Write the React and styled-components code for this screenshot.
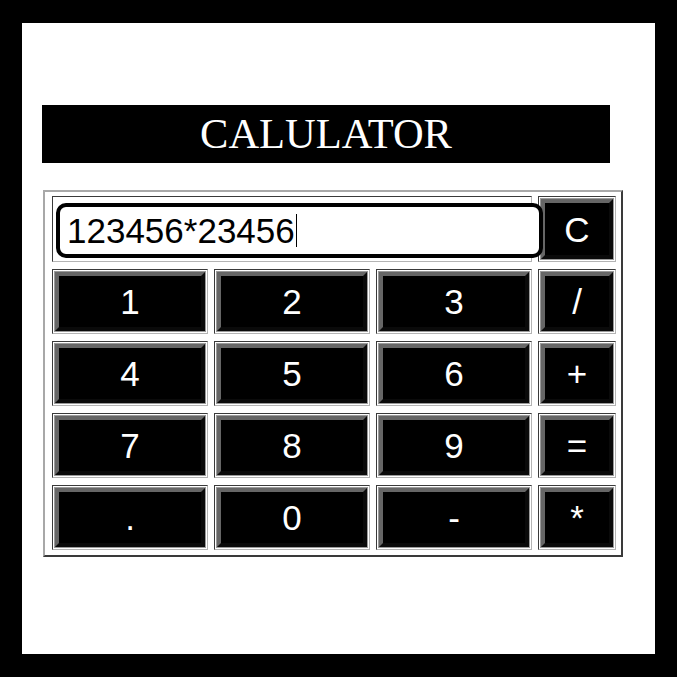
import React from "react";
import styled, { createGlobalStyle } from "styled-components";

const Global = createGlobalStyle`
  html, body { margin: 0; padding: 0; background: #000; }
  body { font-family: "Liberation Sans", Arial, sans-serif; }
`;

const Page = styled.div`
  width: 677px;
  height: 677px;
  box-sizing: border-box;
  padding: 23px 22px 23px 22px;
  background: #000;
`;

const Sheet = styled.main`
  width: 100%;
  height: 100%;
  background: #fff;
  box-sizing: border-box;
  padding: 82px 0 0 20px;
  display: flex;
  flex-direction: column;
  align-items: flex-start;
`;

const TitleBar = styled.h1`
  margin: 0;
  width: 568px;
  height: 58px;
  background: #000;
  color: #fff;
  font-family: "Liberation Serif", "Times New Roman", serif;
  font-weight: 400;
  font-size: 42.5px;
  line-height: 58px;
  text-align: center;
`;

const Keypad = styled.div`
  margin: 27px 0 0 1px;
  display: grid;
  grid-template-columns: 156px 156px 156px 78px;
  grid-template-rows: 66px repeat(4, 65px);
  gap: 7px 6px;
  padding: 4px 5px 5px 7px;
  border: 2px solid;
  border-color: #a8a8a8 #3a3a3a #3a3a3a #a8a8a8;
  background: #fff;
`;

const Cell = styled.div`
  box-sizing: border-box;
  border: 1px solid;
  border-color: #3a3a3a #b4b4b4 #b4b4b4 #3a3a3a;
  padding: ${(p) => (p.$display ? "6px 0 3px 3px" : "2px")};
  grid-column: ${(p) => (p.$span ? `span ${p.$span}` : "auto")};
  display: flex;
  align-items: flex-start;
  background: #fff;
  position: relative;
  z-index: ${(p) => (p.$display ? 2 : 1)};
`;

const Screen = styled.div`
  box-sizing: border-box;
  width: 487px;
  height: 55px;
  border: 4px solid #000;
  border-radius: 10px;
  background: #fff;
  padding: 0 0 0 7px;
  display: flex;
  align-items: center;
  font-family: "Liberation Sans", Arial, sans-serif;
  font-size: 35px;
  color: #000;
  flex-shrink: 0;
`;

const Caret = styled.span`
  display: inline-block;
  width: 1.5px;
  height: 33px;
  margin-left: 1px;
  background: #000;
`;

const Key = styled.button`
  box-sizing: border-box;
  width: 100%;
  height: 100%;
  margin: 0;
  padding: 0;
  background: #000;
  color: #fff;
  border: 4px solid;
  border-color: #666 #0a0a0a #0a0a0a #666;
  box-shadow: 0 0 0 1px #9a9a9a;
  font-family: "Liberation Sans", Arial, sans-serif;
  font-size: 35px;
  line-height: 1;
  display: flex;
  align-items: center;
  justify-content: center;
  cursor: pointer;
`;

const rows = [
  ["1", "2", "3", "/"],
  ["4", "5", "6", "+"],
  ["7", "8", "9", "="],
  [".", "0", "-", "*"],
];

export default function App() {
  return (
    <>
      <Global />
      <Page>
        <Sheet>
          <TitleBar>CALULATOR</TitleBar>
          <Keypad>
            <Cell $span={3} $display>
              <Screen>
                123456*23456
                <Caret />
              </Screen>
            </Cell>
            <Cell>
              <Key>C</Key>
            </Cell>
            {rows.flat().map((k) => (
              <Cell key={k}>
                <Key>{k}</Key>
              </Cell>
            ))}
          </Keypad>
        </Sheet>
      </Page>
    </>
  );
}
